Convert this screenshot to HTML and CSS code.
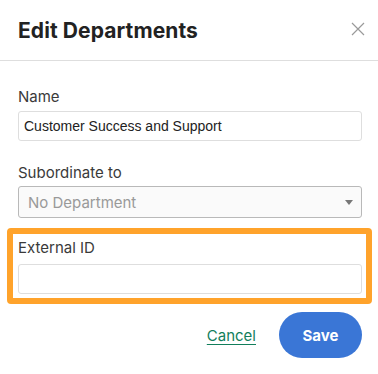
FILE: index.html
```html
<!DOCTYPE html>
<html>
<head>
<meta charset="utf-8">
<link rel="stylesheet" href="styles.css">
</head>
<body>
<div class="modal">
  <div class="header">
    <h1 class="title">Edit Departments</h1>
    <svg class="close" width="14" height="14" viewBox="0 0 14 14"><path d="M1 1L13 13M13 1L1 13" stroke="#9a9a9a" stroke-width="1.2" fill="none"/></svg>
  </div>
  <div class="body">
    <div class="field">
      <label class="label">Name</label>
      <div class="input">Customer Success and Support</div>
    </div>
    <div class="field">
      <label class="label">Subordinate to</label>
      <div class="select"><span>No Department</span><span class="caret"></span></div>
    </div>
    <div class="highlight">
      <label class="label">External ID</label>
      <div class="input"></div>
    </div>
    <div class="actions">
      <a class="cancel" href="#">Cancel</a>
      <button class="save">Save</button>
    </div>
  </div>
</div>
</body>
</html>
```
FILE: styles.css
```css
* { box-sizing: border-box; }
html, body { margin: 0; padding: 0; background: #fff; }
body { width: 378px; height: 374px; overflow: hidden; font-family: Inter, "Liberation Sans", sans-serif; color: #333; }
.header { height: 61px; border-bottom: 1px solid #dedede; display: flex; align-items: flex-start; justify-content: space-between; padding: 18px 13px 0 18px; }
.title { margin: 0; font-size: 21px; font-weight: 700; color: #222; letter-spacing: 0.1px; line-height: 26px; }
.close { margin-top: 4px; }
.body { padding: 27px 16px 0 18px; }
.field { display: flex; flex-direction: column; margin-bottom: 23px; }
.field + .field { margin-bottom: 10px; }
.label { font-size: 15px; line-height: 18px; color: #3a3a3a; margin-bottom: 5px; font-weight: 400; }
.field + .field .label { margin-bottom: 4px; }
.input { height: 30px; border: 1px solid #dedede; border-radius: 3px; padding: 0 5px; font-family: "Liberation Sans", Arial, sans-serif; font-size: 14px; line-height: 28px; color: #222; }
.select { height: 32px; border: 1px solid #b9b9b9; border-radius: 3px; background: #fafafa; display: flex; align-items: center; justify-content: space-between; padding: 0 8px 0 9px; font-size: 15px; color: #999; }
.caret { width: 0; height: 0; border-left: 4px solid transparent; border-right: 4px solid transparent; border-top: 5px solid #777; }
.highlight { margin: 0 -10px 0 -11px; border: 6px solid #ffa32b; border-radius: 4px; padding: 5px 4px 4px 5px; display: flex; flex-direction: column; }
.highlight .label { margin-bottom: 7px; }
.highlight .input { height: 30px; }
.actions { display: flex; justify-content: flex-end; align-items: center; gap: 23px; margin-top: 8px; }
.cancel { color: #127e5b; font-size: 15px; text-decoration: underline; text-underline-offset: 3px; }
.save { width: 83px; height: 46px; border: none; border-radius: 23px; background: #3a76d6; color: #fff; font-family: Inter, "Liberation Sans", sans-serif; font-weight: 700; font-size: 15px; }
```
